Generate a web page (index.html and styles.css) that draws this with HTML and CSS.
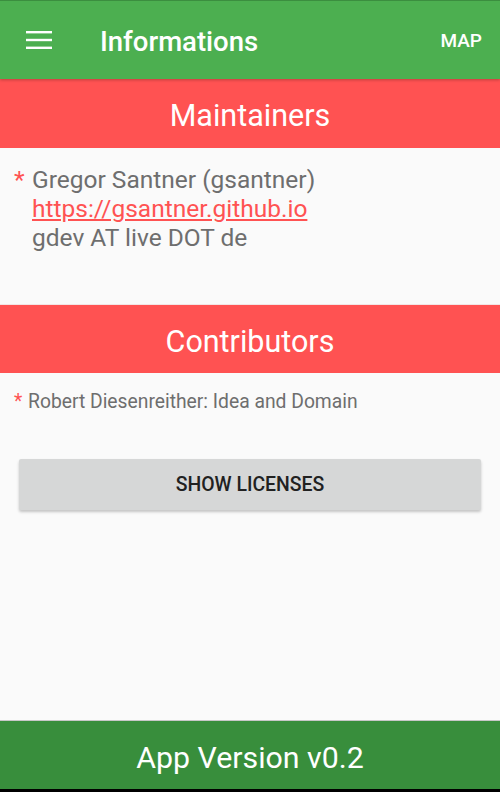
FILE: index.html
```html
<!DOCTYPE html>
<html>
<head>
<meta charset="utf-8">
<link rel="stylesheet" href="styles.css">
</head>
<body>
<div class="app">
  <header class="toolbar">
    <button class="nav-btn" aria-label="menu">
      <svg width="26" height="18" viewBox="0 0 26 18"><rect x="0" y="0" width="26" height="2.4" fill="#fff"/><rect x="0" y="7.8" width="26" height="2.4" fill="#fff"/><rect x="0" y="15.6" width="26" height="2.4" fill="#fff"/></svg>
    </button>
    <h1 class="title">Informations</h1>
    <span class="action">MAP</span>
  </header>
  <main class="content">
    <h2 class="section-header">Maintainers</h2>
    <div class="maintainers">
      <div class="item item-large">
        <span class="star">*</span>
        <div class="lines">
          <div>Gregor Santner (gsantner)</div>
          <a class="link" href="#">https://gsantner.github.io</a>
          <div>gdev AT live DOT de</div>
        </div>
      </div>
    </div>
    <h2 class="section-header section-header-sep">Contributors</h2>
    <div class="contributors">
      <div class="item item-small">
        <span class="star">*</span>
        <div class="lines">Robert Diesenreither: Idea and Domain</div>
      </div>
      <button class="licenses-btn">SHOW LICENSES</button>
    </div>
  </main>
  <footer class="footer">App Version v0.2</footer>
</div>
</body>
</html>
```

FILE: styles.css
```css
* { box-sizing: border-box; }
html, body { margin: 0; padding: 0; }
body {
  font-family: Roboto, "Noto Sans", sans-serif;
  background: #000;
}
.app {
  width: 500px;
  height: 789px;
  display: flex;
  flex-direction: column;
  background: #fafafa;
}
.toolbar {
  height: 79px;
  flex: none;
  background: #4caf50;
  border-top: 1px solid #3b8e3f;
  display: flex;
  align-items: center;
  padding: 0 18px 0 26px;
  color: #fff;
  position: relative;
  z-index: 2;
  box-shadow: 0 1px 3px rgba(0,0,0,0.25);
}
.nav-btn {
  background: none;
  border: 0;
  padding: 0;
  width: 26px;
  height: 18px;
  display: flex;
}
.title {
  margin: 2px 0 0 48px;
  font-size: 27.5px;
  font-weight: 500;
  flex: 1;
}
.action {
  font-size: 19px;
  font-weight: 500;
}
.content {
  flex: 1;
  display: flex;
  flex-direction: column;
}
.section-header {
  margin: 0;
  height: 69px;
  flex: none;
  padding-top: 4px;
  background: #ff5252;
  color: #fff;
  font-size: 30.5px;
  font-weight: 400;
  display: flex;
  align-items: center;
  justify-content: center;
}
.section-header-sep {
  border-top: 1px solid #f2e4e4;
}
.maintainers {
  height: 156px;
  padding: 17px 0 0 14px;
}
.item {
  display: flex;
  color: #6e6e6e;
}
.star {
  color: #ff5252;
}
.item-large {
  font-size: 24.5px;
  line-height: 29px;
}
.item-large .star { width: 18px; }
.item-small {
  font-size: 19.3px;
  line-height: 22px;
}
.item-small .star { width: 14px; }
.link {
  color: #ff5252;
  text-decoration: underline;
  display: block;
}
.contributors {
  padding: 18px 19px 0 14px;
}
.licenses-btn {
  margin: 46px 0 0 5px;
  width: 462px;
  height: 51px;
  border: 0;
  border-radius: 2px;
  background: #d6d7d7;
  box-shadow: 0 2px 3px rgba(0,0,0,0.22);
  font-family: Roboto, sans-serif;
  font-size: 19.4px;
  font-weight: 500;
  color: #212121;
  display: block;
}
.footer {
  height: 69px;
  flex: none;
  padding-top: 4px;
  background: #388e3c;
  border-top: 1px solid #c8c8c8;
  color: #fff;
  font-size: 30.3px;
  display: flex;
  align-items: center;
  justify-content: center;
}
```
